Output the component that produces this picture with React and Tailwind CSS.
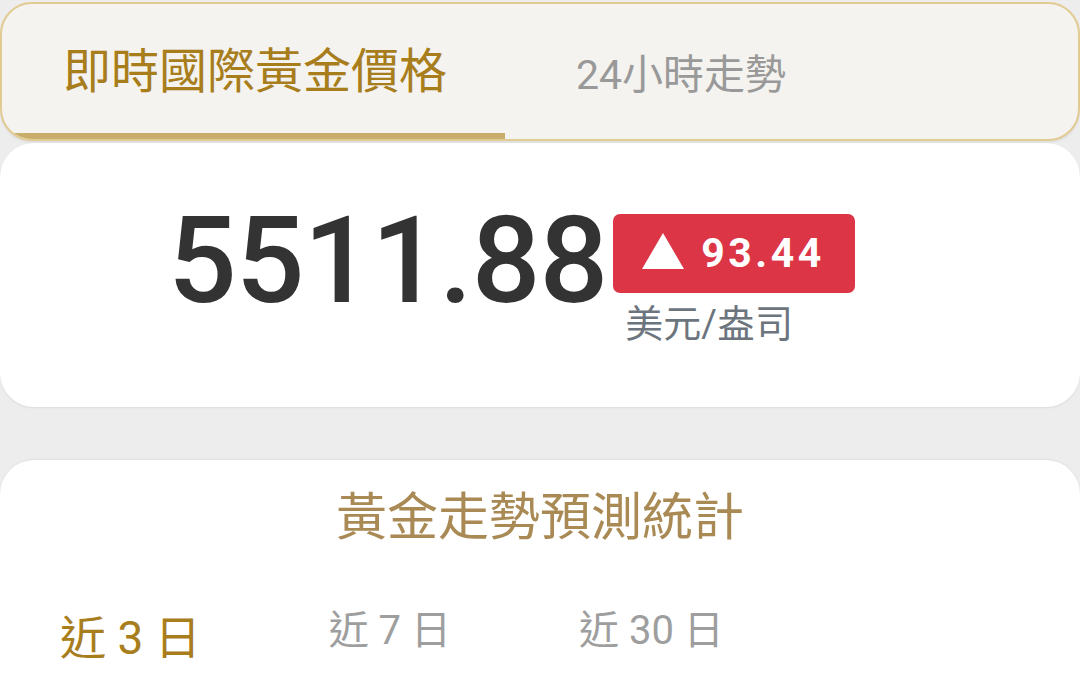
export default function App() {
  const font = { fontFamily: "Roboto, 'Noto Sans CJK TC', 'Noto Sans', sans-serif" };
  return (
    <div className="w-[1080px] h-[674px] overflow-hidden bg-[#ededed] pt-[2px]" style={font}>
      {/* tab bar */}
      <div className="h-[139px] rounded-[32px] border-2 border-[#e2cb93] bg-[#f4f3ef] overflow-hidden flex shadow-[0_2px_2px_rgba(0,0,0,0.06)]">
        <div className="w-[503px] h-full border-b-[6px] border-[#c8ad6b] pl-[61px] pt-[44px]">
          <span className="block text-[48px] leading-none text-[#a87d1c]">即時國際黃金價格</span>
        </div>
        <div className="pl-[71px] pt-[51px]">
          <span className="block text-[41px] leading-none text-[#999999]">24小時走勢</span>
        </div>
      </div>

      {/* price card */}
      <div className="mt-[2px] h-[264px] rounded-[34px] bg-white shadow-[0_1px_2px_rgba(0,0,0,0.08)] pl-[168px] pt-[58px] flex items-start">
        <div className="text-[121px] leading-none font-medium text-[#333333] tracking-[-1px]">5511.88</div>
        <div className="ml-[6px] mt-[13px] flex flex-col">
          <div className="w-[242px] h-[79px] rounded-[7px] bg-[#dc3545] flex items-center pl-[29px] gap-[17px]">
            <svg width="42" height="36" viewBox="0 0 42 36" className="mb-[6px]">
              <polygon points="21,0 42,36 0,36" fill="#ffffff" />
            </svg>
            <span className="text-[41px] leading-none font-bold text-white tracking-[3.5px]">93.44</span>
          </div>
          <div className="ml-[12px] mt-[12px] text-[38px] leading-none text-[#6c757d]">美元/盎司</div>
        </div>
      </div>

      {/* prediction card */}
      <div className="mt-[53px] h-[300px] rounded-[34px] bg-white shadow-[0_-1px_2px_rgba(0,0,0,0.06)] pt-[32px]">
        <div className="text-center text-[51px] leading-none text-[#a98a55]">黃金走勢預測統計</div>
        <div className="mt-[68px] pl-[60px] flex items-start gap-[128px]">
          <span className="mt-[4px] text-[46px] leading-none text-[#a87d1c] whitespace-pre">近 3 日</span>
          <span className="text-[40px] leading-none text-[#9e9e9e] whitespace-pre">近 7 日</span>
          <span className="text-[40px] leading-none text-[#9e9e9e] whitespace-pre">近 30 日</span>
        </div>
      </div>
    </div>
  );
}
